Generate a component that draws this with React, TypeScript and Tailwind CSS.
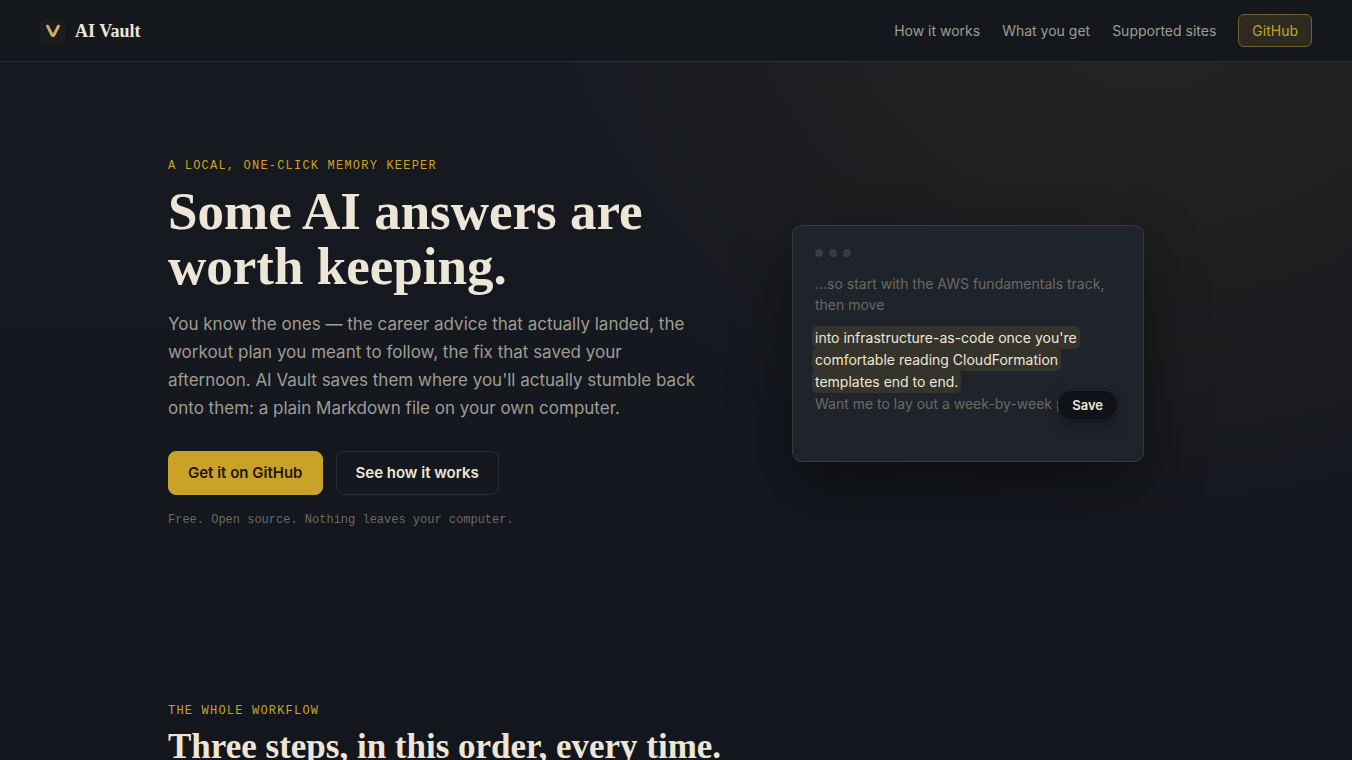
import React from "react";

const navLinks = [
  { label: "How it works", href: "#how" },
  { label: "What you get", href: "#features" },
  { label: "Supported sites", href: "#sites" },
];

const Logo = () => (
  <a href="#top" className="flex items-center gap-[9px]">
    <svg width="26" height="26" viewBox="0 0 26 26" fill="none" aria-hidden="true">
      <rect width="26" height="26" rx="6" fill="#1c1c1c" />
      <path d="M7.6 8.2L12.3 17.4H13.7L18.4 8.2" stroke="#d3a968" strokeWidth="3" strokeLinecap="round" strokeLinejoin="round" />
    </svg>
    <span className="font-['Liberation_Serif',serif] text-lg font-bold text-[#ede6d6]">AI Vault</span>
  </a>
);

const Header = () => (
  <header className="border-b border-[#2b3136] bg-[#14181c]">
    <div className="flex items-center justify-between px-10 py-3.5">
      <Logo />
      <nav className="flex items-center gap-[22px] text-sm text-[#a09c92]">
        {navLinks.map((link) => (
          <a key={link.label} href={link.href}>
            {link.label}
          </a>
        ))}
        <a
          href="#github"
          className="rounded-md border border-[#74612a] bg-[#2d2a20] px-[13px] py-1.5 leading-[19px] text-[#c9a227]"
        >
          GitHub
        </a>
      </nav>
    </div>
  </header>
);

const Eyebrow = ({ children }: { children: React.ReactNode }) => (
  <p className="font-['Liberation_Mono',monospace] text-xs leading-4 tracking-widest text-[#c9a227] uppercase">
    {children}
  </p>
);

const ChatPreview = () => (
  <div className="relative w-full max-w-[352px] rounded-[10px] border border-[#363b42] bg-[#1f232c] px-[22px] pt-[23px] pb-[46px] text-sm shadow-[0_24px_60px_rgba(0,0,0,0.45)]">
    <div className="mb-4 flex gap-1.5">
      <span className="size-2 rounded-full bg-[#383c43]" />
      <span className="size-2 rounded-full bg-[#383c43]" />
      <span className="size-2 rounded-full bg-[#383c43]" />
    </div>
    <p className="mb-3 leading-[21px] text-[#6b6961]">…so start with the AWS fundamentals track, then move</p>
    <p className="leading-[22px] text-[#ede6d6]">
      <mark className="-ml-[3px] rounded-[5px] bg-[#34332c] box-decoration-clone px-[3px] py-[3px] text-inherit">
        into infrastructure-as-code once you're comfortable reading CloudFormation templates end to end.
      </mark>
    </p>
    <p className="truncate leading-[22px] text-[#6b6961]">Want me to lay out a week-by-week plan?</p>
    <button
      type="button"
      className="absolute right-[26px] bottom-[42px] rounded-full bg-[#0f1216] px-3.5 py-1 text-[13px] leading-5 font-semibold text-[#ede6d6] shadow-[0_6px_16px_rgba(0,0,0,0.4)]"
    >
      Save
    </button>
  </div>
);

const Hero = () => (
  <section className="mx-auto grid max-w-[1080px] items-center gap-14 px-8 py-24 md:grid-cols-[1.1fr_0.9fr]">
    <div>
      <Eyebrow>A local, one-click memory keeper</Eyebrow>
      <h1 className="mt-2.5 font-['Liberation_Serif',serif] text-[53px] leading-[55px] font-bold text-[#ede6d6]">
        Some AI answers are worth keeping.
      </h1>
      <p className="mt-4 text-[17px] leading-7 text-[#a09c92]">
        You know the ones — the career advice that actually landed, the workout plan you meant to follow, the fix that
        saved your afternoon. AI Vault saves them where you'll actually stumble back onto them: a plain Markdown file on
        your own computer.
      </p>
      <div className="mt-[29px] flex flex-wrap gap-[13px] text-[15px] leading-5 font-semibold">
        <a href="#github" className="rounded-lg border border-[#c9a227] bg-[#c9a227] px-[19px] py-[11px] text-[#1c170a]">
          Get it on GitHub
        </a>
        <a href="#how" className="rounded-lg border border-[#2a2e36] px-[19px] py-[11px] text-[#ede6d6]">
          See how it works
        </a>
      </div>
      <p className="mt-[17px] font-['Liberation_Mono',monospace] text-xs leading-4 text-[#6b6961]">
        Free. Open source. Nothing leaves your computer.
      </p>
    </div>
    <div className="flex justify-center">
      <ChatPreview />
    </div>
  </section>
);

const Workflow = () => (
  <section id="how" className="mx-auto max-w-[1080px] px-8 pt-[79px]">
    <Eyebrow>The whole workflow</Eyebrow>
    <h2 className="mt-2 font-['Liberation_Serif',serif] text-[35px] leading-10 font-bold text-[#ede6d6]">
      Three steps, in this order, every time.
    </h2>
  </section>
);

const App = () => {
  return (
    <div
      id="top"
      className="min-h-screen bg-[#14171d] bg-[radial-gradient(ellipse_600px_540px_at_85%_0%,rgba(201,150,39,0.09),transparent),linear-gradient(#171a21,#13161c)] font-['Inter',sans-serif]"
    >
      <Header />
      <main>
        <Hero />
        <Workflow />
      </main>
    </div>
  );
};

export default App;
